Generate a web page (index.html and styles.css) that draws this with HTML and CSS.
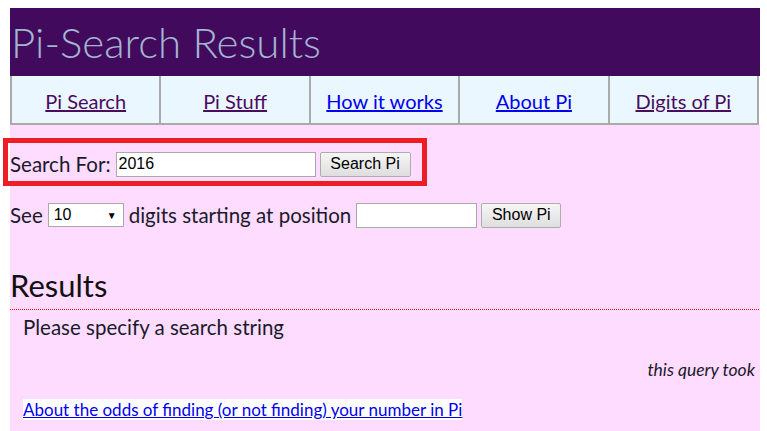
FILE: index.html
```html
<!DOCTYPE html>
<html>
<head>
<meta charset="utf-8">
<title>Pi-Search Results</title>
<link rel="stylesheet" href="styles.css">
</head>
<body>
<div class="page">
  <header class="banner"><h1 class="title">Pi-Search Results</h1></header>
  <nav class="nav">
    <div class="nav-cell"><a class="visited" href="#">Pi Search</a></div>
    <div class="nav-cell"><a class="visited" href="#">Pi Stuff</a></div>
    <div class="nav-cell"><a href="#">How it works</a></div>
    <div class="nav-cell"><a href="#">About Pi</a></div>
    <div class="nav-cell"><a class="visited" href="#">Digits of Pi</a></div>
  </nav>
  <main class="content">
    <form class="row row-search">
      <span class="label">Search For:</span>
      <input class="field field-search" type="text" value="2016">
      <button class="btn" type="button">Search Pi</button>
    </form>
    <form class="row row-see">
      <span class="label">See</span>
      <span class="select"><span>10</span><span class="arrow">&#9660;</span></span>
      <span class="label">digits starting at position</span>
      <input class="field field-pos" type="text" value="">
      <button class="btn" type="button">Show Pi</button>
    </form>
    <h2 class="results-title">Results</h2>
    <div class="rule"></div>
    <div class="results">
      <p class="message">Please specify a search string</p>
      <p class="took">this query took</p>
      <p class="odds"><a href="#">About the odds of finding (or not finding) your number in Pi</a></p>
    </div>
  </main>
  <div class="highlight"></div>
</div>
</body>
</html>
```
FILE: styles.css
```css
html, body {
  margin: 0;
  padding: 0;
  background: #ffffff;
}
body {
  font-family: "Lato", "Liberation Sans", sans-serif;
  color: #1a1a2a;
}
.page {
  position: relative;
  width: 750px;
  margin: 8px 0 0 10px;
}
.banner {
  background: #420a5c;
  height: 68px;
  display: flex;
  align-items: center;
}
.title {
  margin: 0;
  padding-left: 1px;
  font-family: "Lato", sans-serif;
  font-weight: 300;
  font-size: 42px;
  letter-spacing: 0;
  color: #a3b5d2;
  line-height: 1;
}
.nav {
  display: grid;
  grid-template-columns: repeat(5, 1fr);
  width: 749px;
  background: #eaf7ff;
  border-bottom: 2px solid #aaaaaa;
  border-left: 2px solid #aaaaaa;
  box-sizing: border-box;
}
.nav-cell {
  height: 47px;
  border-right: 2px solid #aaaaaa;
  display: flex;
  align-items: center;
  justify-content: center;
  font-size: 20px;
  padding-top: 2px;
  box-sizing: border-box;
}
.nav-cell a {
  color: #0000ee;
}
.nav-cell a.visited {
  color: #4a0c5e;
}
.content {
  background: #fddcff;
  padding: 26px 0 12px 0;
  min-height: 280px;
}
.row {
  display: flex;
  align-items: center;
  margin: 0;
  font-size: 20.5px;
}
.row-search {
  height: 26px;
}
.row-see {
  height: 26px;
  margin-top: 25px;
}
.label {
  margin-right: 5px;
}
.field {
  height: 25px;
  box-sizing: border-box;
  border: 1px solid #a9a9a9;
  background: #ffffff;
  font-family: "Liberation Sans", Arial, sans-serif;
  font-size: 16px;
  color: #000000;
  padding: 2px 2px;
  margin: 0 4px 0 0;
}
.field-search {
  width: 200px;
}
.field-pos {
  width: 121px;
}
.btn {
  height: 25px;
  box-sizing: border-box;
  border: 1px solid #adadad;
  border-radius: 2px;
  background: linear-gradient(#f6f6f6, #dedede);
  font-family: "Liberation Sans", Arial, sans-serif;
  font-size: 16px;
  color: #000000;
  padding: 0 6px;
  margin: 0;
}
.row-search .btn {
  width: 91px;
}
.row-see .btn {
  width: 80px;
}
.select {
  display: inline-flex;
  align-items: center;
  justify-content: space-between;
  width: 76px;
  height: 24px;
  box-sizing: border-box;
  border: 1px solid #a9a9a9;
  background: #ffffff;
  font-family: "Liberation Sans", Arial, sans-serif;
  font-size: 16px;
  color: #000000;
  padding: 0 6px 0 5px;
  margin-right: 5px;
}
.arrow {
  font-size: 10px;
}
.results-title {
  margin: 38px 0 0 0;
  font-weight: 400;
  font-size: 31px;
  line-height: 38px;
  height: 38px;
  color: #111111;
  padding-bottom: 5px;
}
.rule {
  height: 1px;
  background-image: linear-gradient(to right, #ff0000 50%, transparent 50%);
  background-size: 2px 1px;
  background-repeat: repeat-x;
}
.results {
  padding: 0 5px 0 13px;
}
.message {
  margin: 4px 0 0 0;
  font-size: 20.5px;
  line-height: 27px;
}
.took {
  margin: 18px 0 0 0;
  text-align: right;
  font-style: italic;
  font-size: 17.5px;
  line-height: 22px;
}
.odds {
  margin: 19px 0 0 0;
  font-size: 17px;
  line-height: 20px;
}
.odds a {
  color: #0000ee;
  background: #ffffff;
}
.highlight {
  position: absolute;
  left: -7px;
  top: 130px;
  width: 424px;
  height: 48px;
  border: 5px solid #ee1c25;
  box-sizing: border-box;
}
```
